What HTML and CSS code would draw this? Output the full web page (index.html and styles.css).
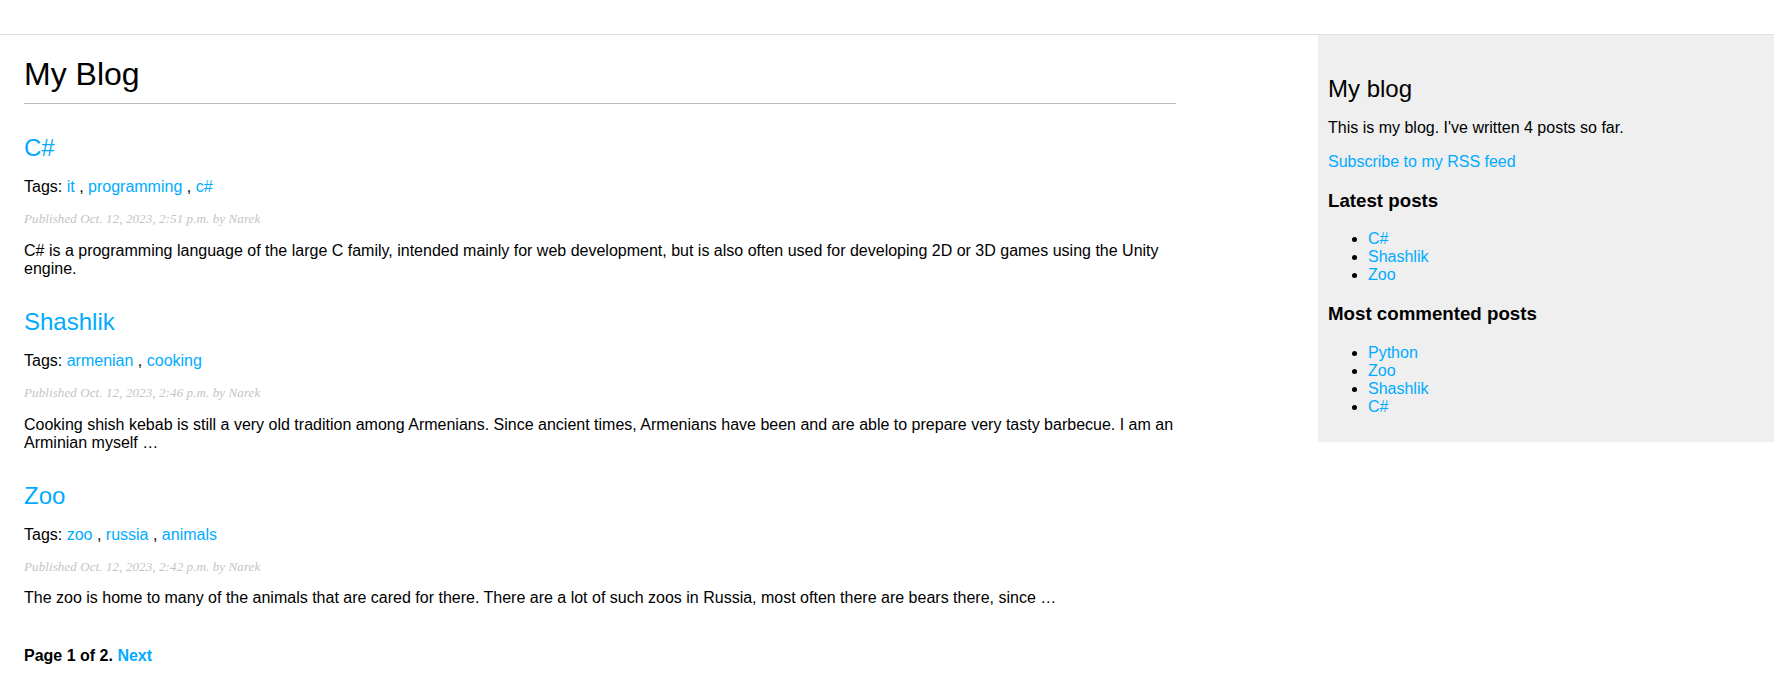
FILE: index.html
```html
<!DOCTYPE html>
<html lang="en">
<head>
<meta charset="utf-8">
<title>My Blog</title>
<link rel="stylesheet" href="styles.css">
</head>
<body>
<div class="topbar"></div>
<div class="layout">
  <div class="content">
    <h1>My Blog</h1>

    <h2><a href="#">C#</a></h2>
    <p class="tags">Tags: <a href="#">it</a> , <a href="#">programming</a> , <a href="#">c#</a></p>
    <p class="date">Published Oct. 12, 2023, 2:51 p.m. by Narek</p>
    <p>C# is a programming language of the large C family, intended mainly for web development, but is also often used for developing 2D or 3D games using the Unity engine.</p>

    <h2><a href="#">Shashlik</a></h2>
    <p class="tags">Tags: <a href="#">armenian</a> , <a href="#">cooking</a></p>
    <p class="date">Published Oct. 12, 2023, 2:46 p.m. by Narek</p>
    <p>Cooking shish kebab is still a very old tradition among Armenians. Since ancient times, Armenians have been and are able to prepare very tasty barbecue. I am an Arminian myself …</p>

    <h2><a href="#">Zoo</a></h2>
    <p class="tags">Tags: <a href="#">zoo</a> , <a href="#">russia</a> , <a href="#">animals</a></p>
    <p class="date">Published Oct. 12, 2023, 2:42 p.m. by Narek</p>
    <p>The zoo is home to many of the animals that are cared for there. There are a lot of such zoos in Russia, most often there are bears there, since …</p>

    <div class="pagination">
      <span class="current">Page 1 of 2.</span>
      <a href="#">Next</a>
    </div>
  </div>

  <div class="sidebar">
    <h2>My blog</h2>
    <p>This is my blog. I've written 4 posts so far.</p>
    <p><a href="#">Subscribe to my RSS feed</a></p>
    <h3>Latest posts</h3>
    <ul>
      <li><a href="#">C#</a></li>
      <li><a href="#">Shashlik</a></li>
      <li><a href="#">Zoo</a></li>
    </ul>
    <h3>Most commented posts</h3>
    <ul>
      <li><a href="#">Python</a></li>
      <li><a href="#">Zoo</a></li>
      <li><a href="#">Shashlik</a></li>
      <li><a href="#">C#</a></li>
    </ul>
  </div>
</div>
</body>
</html>
```

FILE: styles.css
```css
html, body {
  margin: 0;
  padding: 0;
  background: #fff;
}

body {
  font-family: "Liberation Sans", Arial, Helvetica, sans-serif;
  font-size: 16px;
  color: #000;
}

a {
  color: #00abff;
  text-decoration: none;
}

.topbar {
  height: 34px;
  border-bottom: 1px solid #dedede;
}

.layout {
  display: flex;
  justify-content: space-between;
  align-items: flex-start;
}

.content {
  width: 1152px;
  margin-left: 24px;
}

h1 {
  font-size: 32px;
  font-weight: normal;
  margin: 21.44px 0;
  padding: 0 0 10px 0;
  border-bottom: 1px solid #bbb;
}

h2 {
  font-size: 24px;
  font-weight: normal;
  margin: 30px 0 0;
}

p {
  margin: 16px 0;
}

p.date {
  color: #c4c4c4;
  font-family: "Liberation Serif", Georgia, serif;
  font-size: 13px;
  line-height: 13.6px;
  letter-spacing: 0.1px;
  font-style: italic;
  margin: 16px 0;
}

.pagination {
  margin: 40px 0;
  font-weight: bold;
}

.sidebar {
  width: 436px;
  padding: 10px;
  background: #efefef;
}

.sidebar h3 {
  font-size: 18.72px;
  font-weight: bold;
  margin: 18.72px 0;
}

.sidebar ul {
  margin: 18.72px 0 16px;
  padding-left: 40px;
}
```
